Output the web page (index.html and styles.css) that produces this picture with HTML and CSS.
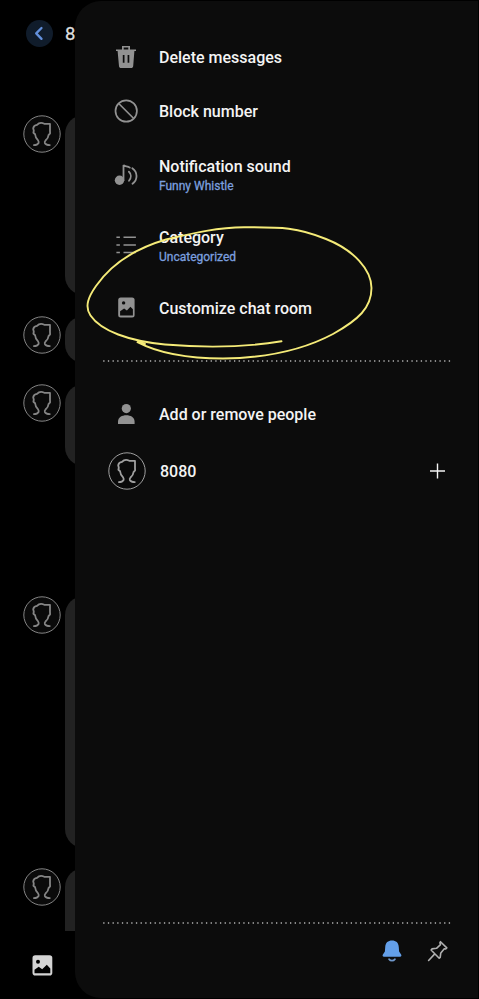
FILE: index.html
```html
<!DOCTYPE html>
<html lang="en">
<head>
<meta charset="utf-8">
<title>Messages</title>
<link rel="stylesheet" href="styles.css">
</head>
<body>
<svg class="defs" width="0" height="0">
  <symbol id="avatar" viewBox="0 0 38 38">
    <circle cx="19" cy="19" r="18.2" fill="#0a0a0a" stroke="currentColor" stroke-width="1"/>
    <path d="M10.900 30.100c2.600 0 4-.9 4.700-2.100.4-1.200-.2-2-.7-2.900-1.700-1.600-2.600-3.200-2.800-5.900l-1.700-1.400.4-2-.6-2.600c.4-2 1.900-3 3.800-3.300 1.800-2 4.700-2.400 7.300-1.100l5.700.1V16l.1 2.400-1.600 1.800c-.1 2.300-1.400 3.800-3 5.300-.8.900-1 1.800-.6 2.700.7 1.100 2.500 1.900 4.900 1.900" fill="none" stroke="currentColor" stroke-width="1.800" stroke-linejoin="round" stroke-linecap="round"/>
  </symbol>
</svg>
<div class="screen">
  <main class="chat">
    <header class="chat-header">
      <span class="back"><svg width="27" height="27" viewBox="0 0 27 27"><path d="M15.500 8l-5.300 5.400 5.300 5.500" fill="none" stroke="#6390dc" stroke-width="2.300" stroke-linecap="round" stroke-linejoin="round"/></svg></span>
      <span class="chat-title">8080</span>
    </header>
    <section class="messages">
      <div class="message long"><svg class="avatar"><use href="#avatar"/></svg><div class="bubble"></div></div>
      <div class="message short"><svg class="avatar"><use href="#avatar"/></svg><div class="bubble"></div></div>
      <div class="message medium"><svg class="avatar"><use href="#avatar"/></svg><div class="bubble"></div></div>
      <div class="message tall"><svg class="avatar"><use href="#avatar"/></svg><div class="bubble"></div></div>
      <div class="message last"><svg class="avatar"><use href="#avatar"/></svg><div class="bubble"></div></div>
    </section>
    <footer class="composer">
      <svg width="21" height="21" viewBox="0 0 21 21"><rect x=".5" y=".3" width="19.800" height="20.200" rx="2.800" fill="#d4d4d4"/><circle cx="6" cy="6.700" r="2" fill="#000"/><path d="M2.500 18.300v-3.600l4.200-3 3.500 2.500 4.600-4.500 3.500 3.700v4.900z" fill="#000"/></svg>
    </footer>
  </main>

  <aside class="drawer">
    <ul class="menu">
      <li class="item">
        <svg class="icon" viewBox="0 0 24 24"><path fill="#929292" fill-rule="evenodd" d="M8 .9h8v3.500h6V6h-1.600l-1.200 15c-.1 1.400-.9 2-2.200 2H7.200c-1.300 0-2.100-.6-2.200-2L3.600 6H2V4.400h6zm1.700 1.600v1.900h4.600V2.500zM8.800 10v7.800h1.700V10zm4.800 0v7.800h1.700V10z"/></svg>
        <span class="label">Delete messages</span>
      </li>
      <li class="item">
        <svg class="icon" viewBox="0 0 24 24"><g fill="none" stroke="#929292" stroke-width="1.700"><circle cx="12.200" cy="12" r="10.700"/><path d="M4.700 4.500l15 15"/></g></svg>
        <span class="label">Block number</span>
      </li>
      <li class="item two-line">
        <svg class="icon" viewBox="0 0 24 24"><circle cx="5.500" cy="18.200" r="4.700" fill="#929292"/><path d="M9.500 18.200V3c1 2 4 .8 6.300 2.600M14.900 9.700c2.500 2.200 2.500 6 .1 9.100M18.300 6.300c5.600 4 5.600 11.500.2 15.500" fill="none" stroke="#929292" stroke-width="1.800" stroke-linecap="round"/></svg>
        <span class="label">Notification sound<small>Funny Whistle</small></span>
      </li>
      <li class="item two-line category">
        <svg class="icon" viewBox="0 0 24 24"><path d="M2.400 4.200h3.500M9.500 4.200h12.400M2.400 11.900h3.500M9.500 11.900h12.400M2.400 19.600h3.500M9.500 19.600h12.400" stroke="#929292" stroke-width="1.500"/></svg>
        <span class="label">Category<small>Uncategorized</small></span>
      </li>
      <li class="item customize">
        <svg class="icon" viewBox="0 0 24 24"><rect x="4.200" y="1.500" width="16.400" height="20" rx="2.500" fill="#929292"/><circle cx="9.600" cy="6.900" r="1.700" fill="#0d0d0d"/><path d="M6.100 19.500v-4.200l4-2.700 2.800 2 3.500-3.800 2.500 2.500v6.200z" fill="#0d0d0d"/></svg>
        <span class="label">Customize chat room</span>
      </li>
    </ul>
    <svg class="dots" width="348" height="2"><path d="M.2 1h347"/></svg>
    <div class="people">
      <div class="item add">
        <svg class="icon" viewBox="0 0 24 24"><circle cx="12.300" cy="6.600" r="4.600" fill="#929292"/><path d="M4 22v-2.300c0-4.500 4-6.500 8.300-6.500s8.300 2 8.300 6.500V22z" fill="#929292"/></svg>
        <span class="label">Add or remove people</span>
      </div>
      <div class="person">
        <svg class="avatar"><use href="#avatar"/></svg>
        <span class="label">8080</span>
        <svg class="plus" width="16" height="16" viewBox="0 0 16 16"><path d="M7.500 .5v15M0 8h15" stroke="#f4f4f4" stroke-width="1.400"/></svg>
      </div>
    </div>
    <footer class="drawer-footer">
      <svg class="dots" width="348" height="2"><path d="M.2 1h347"/></svg>
      <div class="actions">
        <svg width="22" height="24" viewBox="0 0 22 24"><path d="M4.200 8.200C4.500 3.700 7 1.600 11 1.600s6.500 2.100 6.800 6.600l.3 4.200 2 3c.7 1.100.2 2.300-1 2.300H2.900c-1.200 0-1.700-1.200-1-2.300l2-3z" fill="#639fe9"/><path d="M8.100 20.200c1.500 2 4.300 2 5.800 0" fill="none" stroke="#7098cb" stroke-width="1.800" stroke-linecap="round"/></svg>
        <svg width="22" height="22" viewBox="0 0 22 22"><path d="M1.600 20.500l6.200-6.600M13.500 1.700l6.300 6.200-1.100 1.100-1.400-.2-3.500 4.100-.6 4.400-1 .9L4.100 10l1-1.100 4.400-.6 4-3.700-.6-1.800z" fill="none" stroke="#b0b0b0" stroke-width="1.600" stroke-linejoin="round" stroke-linecap="round"/></svg>
      </div>
    </footer>
  </aside>

  <svg class="highlight" viewBox="0 0 479 999"><path d="M281.500 341.300C247 347 205 348 165 344.500 129 341 101 331 90.500 315.500 84 306 89 296 96 286 112 263 137 248 166 239.500 190 234 216 227.500 244 227.300 282 227 298 227.500 326 239 354 250 371.500 270 371.500 288 371.500 308 358 320 333 334 303 350 266 358 223 358.500 187 358.500 158 353 137.500 342.200L145 344" fill="none" stroke="#f5eb78" stroke-width="1.900" stroke-linecap="round" stroke-linejoin="round"/></svg>
</div>
</body>
</html>
```
FILE: styles.css
```css
* { box-sizing: border-box; }
body { margin: 0; background: #000; font-family: Roboto, sans-serif; }
svg { display: block; flex: none; }
.defs { position: absolute; }
.screen { position: relative; width: 479px; height: 999px; overflow: hidden; background: #000; }
.chat { display: flex; flex-direction: column; height: 999px; color: #858585; }
.chat-header { display: flex; align-items: center; gap: 12px; height: 67px; padding-left: 26px; }
.back { width: 27px; height: 27px; border-radius: 50%; background: #101c2b; }
.chat-title { padding-top: 1px; color: #dedede; font-size: 18.5px; -webkit-text-stroke: .3px #dedede; }
.messages { height: 864px; padding-top: 48px; overflow: hidden; }
.message { display: flex; align-items: flex-start; gap: 4px; padding-left: 23px; }
.avatar { width: 38px; height: 38px; }
.bubble { width: 300px; height: 100%; border-radius: 19px; background: #222; }
.long { height: 180px; margin-bottom: 21px; }
.short { height: 47px; margin-bottom: 21px; }
.medium { height: 82px; margin-bottom: 130px; }
.tall { height: 252px; margin-bottom: 20px; }
.last { height: 120px; }
.composer { padding: 24px 0 0 32px; }

.drawer { position: absolute; top: 1px; left: 75px; width: 403px; height: 997px; display: flex; flex-direction: column; padding: 29px 27px 0 28px; border-radius: 26px 0 0 26px; background: #0c0c0c; color: #f4f4f4; }
.menu { margin: 0; padding: 0; list-style: none; }
.item { display: flex; align-items: center; gap: 21px; height: 54px; padding-left: 11px; }
.icon { width: 24px; height: 24px; }
.label { padding-top: 2px; font-size: 16px; line-height: 20px; font-weight: 500; white-space: nowrap; }
.label small { display: block; font-size: 12px; line-height: 18px; font-weight: 400; color: #7b9fdf; -webkit-text-stroke: .3px #7b9fdf; }
.two-line { height: 71px; }
.two-line .label { padding-top: 4px; }
.customize { height: 56px; }
.dots { stroke: #b4b4b4; stroke-width: 1.300; stroke-dasharray: 1.300 3.370; }
.menu + .dots { margin-top: 24px; }
.people { padding-top: 25px; }
.person { display: flex; align-items: center; gap: 14px; height: 60px; padding: 0 5px 0 5px; color: #a0a0a0; }
.person .label { flex: 1; color: #f4f4f4; }
.drawer-footer { margin-top: auto; height: 76px; }
.actions { display: flex; justify-content: flex-end; align-items: center; gap: 24px; padding: 15px 2px 0 0; }
.highlight { position: absolute; inset: 0; width: 479px; height: 999px; pointer-events: none; }
```
